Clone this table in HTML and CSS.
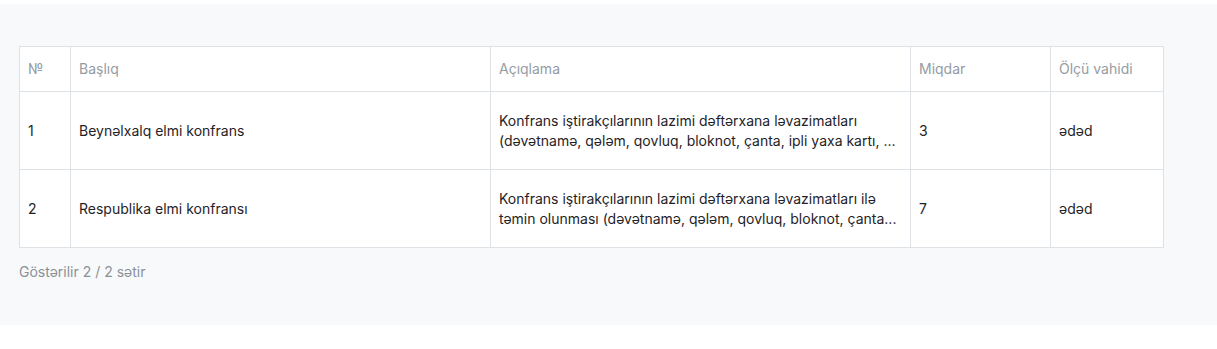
FILE: index.html
```html
<!DOCTYPE html>
<html lang="az">
<head>
<meta charset="utf-8">
<title>Cədvəl</title>
<link rel="stylesheet" href="styles.css">
</head>
<body>
<section class="panel">
  <table class="data-table">
    <colgroup>
      <col class="c-no">
      <col class="c-title">
      <col class="c-desc">
      <col class="c-qty">
      <col class="c-unit">
    </colgroup>
    <thead>
      <tr>
        <th>№</th>
        <th>Başlıq</th>
        <th>Açıqlama</th>
        <th>Miqdar</th>
        <th>Ölçü vahidi</th>
      </tr>
    </thead>
    <tbody>
      <tr>
        <td>1</td>
        <td>Beynəlxalq elmi konfrans</td>
        <td><span class="line">Konfrans iştirakçılarının lazimi dəftərxana ləvazimatları</span><span class="line">(dəvətnamə, qələm, qovluq, bloknot, çanta, ipli yaxa kartı, ...</span></td>
        <td>3</td>
        <td>ədəd</td>
      </tr>
      <tr>
        <td>2</td>
        <td>Respublika elmi konfransı</td>
        <td><span class="line">Konfrans iştirakçılarının lazimi dəftərxana ləvazimatları ilə</span><span class="line">təmin olunması (dəvətnamə, qələm, qovluq, bloknot, çanta...</span></td>
        <td>7</td>
        <td>ədəd</td>
      </tr>
    </tbody>
  </table>
  <p class="summary">Göstərilir 2 / 2 sətir</p>
</section>
</body>
</html>
```

FILE: styles.css
```css
html, body {
  margin: 0;
  padding: 0;
  background: #ffffff;
}

body {
  font-family: Inter, "Noto Sans", "Liberation Sans", sans-serif;
  font-size: 14px;
  color: #212529;
}

.panel {
  margin-top: 4px;
  height: 321px;
  box-sizing: border-box;
  padding: 42px 19px 0 19px;
  background: #f8f9fa;
}

.data-table {
  width: 1144px;
  border-collapse: collapse;
  table-layout: fixed;
  background: #ffffff;
}

.c-no { width: 51px; }
.c-title { width: 420px; }
.c-desc { width: 420px; }
.c-qty { width: 140px; }
.c-unit { width: 113px; }

.data-table th,
.data-table td {
  border: 1px solid #dee2e6;
  text-align: left;
  vertical-align: middle;
  padding: 0 8px;
  line-height: 20px;
}

.data-table th {
  height: 44px;
  font-weight: 400;
  color: #959ca3;
}

.data-table td {
  height: 77px;
  color: #1f2327;
}

.line {
  display: block;
  white-space: nowrap;
}

.summary {
  margin: 14px 0 0 0;
  line-height: 20px;
  color: #8a9197;
}
```
